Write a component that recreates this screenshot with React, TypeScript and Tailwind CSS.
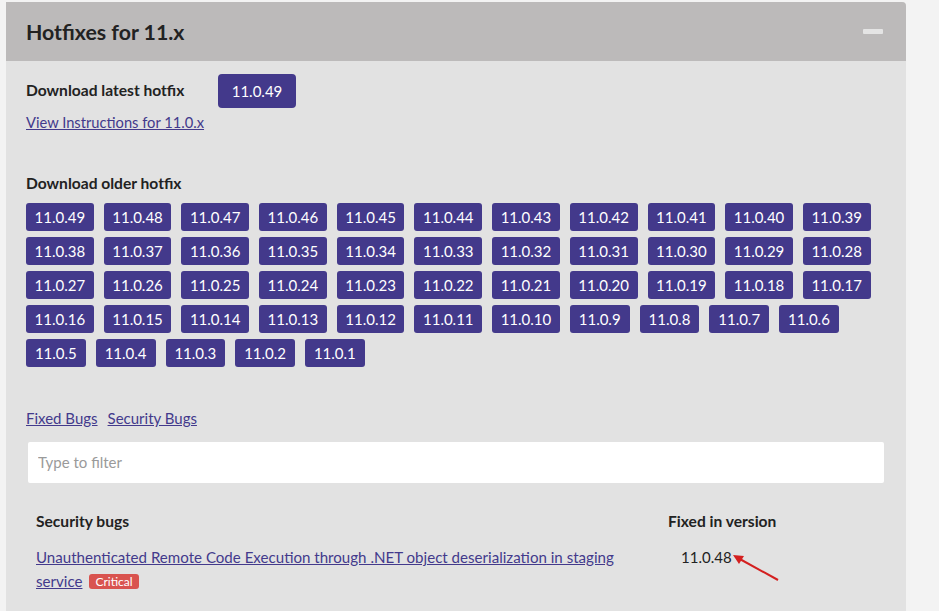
import React from "react";

const all: string[] = [];
for (let i = 49; i >= 1; i--) all.push(`11.0.${i}`);

export default function App() {
  return (
    <div className="min-h-[611px] w-[939px] bg-[#f3f3f3] pt-[2px] pl-[6px]" style={{ fontFamily: "Lato, 'Liberation Sans', sans-serif" }}>
      <div className="w-[900px] min-h-[609px] bg-[#e2e2e2] rounded-tr-[4px] overflow-hidden">
        <div className="h-[59px] bg-[#bcbaba] flex items-center justify-between pl-[20px] pr-[23px]">
          <h2 className="text-[21.3px] font-bold text-[#222] leading-none mt-[2px]">Hotfixes for 11.x</h2>
          <div className="w-[20px] h-[5px] bg-[#e4e4e4] rounded-[1px]" />
        </div>
        <div className="pl-[20px] pr-[20px] pt-[13px]">
          <div className="flex items-center">
            <div className="w-[192px] text-[15.6px] font-bold text-[#222]">Download latest hotfix</div>
            <button className="h-[34px] w-[78px] rounded-[4px] bg-[#43398b] text-white text-[15px]">11.0.49</button>
          </div>
          <div className="mt-[2px] leading-[24px]">
            <a href="#" className="text-[14.7px] text-[#433a8c] underline">View Instructions for 11.0.x</a>
          </div>
          <div className="mt-[38px] text-[15.6px] font-bold text-[#222] leading-[22px]">Download older hotfix</div>
          <div className="mt-[9px] flex flex-wrap gap-x-[10px] gap-y-[6px] w-[860px]">
            {all.map((v) => (
              <button
                key={v}
                className={
                  v.length > 6
                    ? "h-[28px] w-[67.7px] rounded-[3px] bg-[#43398b] text-white text-[15px]"
                    : "h-[28px] w-[59.75px] rounded-[3px] bg-[#43398b] text-white text-[15px]"
                }
              >
                {v}
              </button>
            ))}
          </div>
          <div className="mt-[39px] flex gap-[10px] text-[15px] leading-[24px]">
            <a href="#" className="text-[#433a8c] underline">Fixed Bugs</a>
            <a href="#" className="text-[#433a8c] underline">Security Bugs</a>
          </div>
          <div className="ml-[2px] mt-[12px] w-[856px] h-[41px] bg-white rounded-[2px] flex items-center pl-[10px]">
            <input
              className="w-full outline-none text-[15px] text-[#333] placeholder:text-[#9a9a9a] bg-transparent"
              placeholder="Type to filter"
            />
          </div>
          <div className="ml-[10px] mt-[27px] flex text-[15px] text-[#222]">
            <div className="w-[632px]">
              <div className="font-bold text-[15.6px] leading-[22px]">Security bugs</div>
              <div className="mt-[13px] leading-[24px] w-[600px]">
                <a href="#" className="text-[15.1px] text-[#433a8c] underline">
                  <span>Unauthenticated Remote Code Execution through .NET object deserialization in staging</span>{" "}
                  <span>service</span>
                </a>
                <span className="ml-[7px] inline-block align-middle rounded-[3px] bg-[#d9534f] text-white text-[12px] leading-[15px] px-[6px] mb-[3px]">Critical</span>
              </div>
            </div>
            <div className="relative">
              <div className="font-bold text-[15.6px] leading-[22px]">Fixed in version</div>
              <div className="mt-[13px] leading-[24px] pl-[13px]">11.0.48</div>
              <svg className="absolute left-[62px] top-[40px]" width="50" height="32" viewBox="0 0 50 32">
                <line x1="48" y1="30" x2="8" y2="8" stroke="#d42020" strokeWidth="2" />
                <polygon points="3,5 14,6 9,14" fill="#d42020" />
              </svg>
            </div>
          </div>
        </div>
      </div>
    </div>
  );
}
